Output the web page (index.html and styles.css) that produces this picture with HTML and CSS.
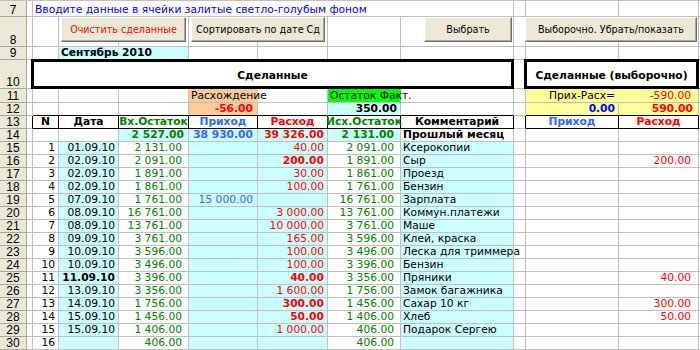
FILE: index.html
```html
<!DOCTYPE html>
<html lang="ru">
<head>
    <meta charset="UTF-8">
    <title>Учёт расходов — сентябрь 2010</title>
    <link rel="stylesheet" href="styles.css">
</head>
<body>
    <div class="sheet">
        <!-- кнопки макросов -->
        <div class="btn btn-clear">Очистить сделанные</div>
        <div class="btn btn-sort">Сортировать по дате Сд</div>
        <div class="btn btn-pick">Выбрать</div>
        <div class="btn btn-toggle">Выборочно. Убрать/показать</div>

        <!-- 7 -->
        <div class="rh">7</div>
        <div class="c"></div>
        <div class="c s7 note">Вводите данные в ячейки залитые светло-голубым фоном</div>
        <div class="c"></div><div class="c"></div><div class="c"></div><div class="c l"></div>

        <!-- 8 -->
        <div class="rh">8</div>
        <div class="c"></div><div class="c"></div><div class="c"></div><div class="c"></div>
        <div class="c"></div><div class="c"></div><div class="c"></div><div class="c"></div>
        <div class="c"></div><div class="c"></div><div class="c"></div><div class="c l"></div>

        <!-- 9 -->
        <div class="rh">9</div>
        <div class="c"></div><div class="c"></div>
        <div class="c s2 cy b">Сентябрь 2010</div>
        <div class="c"></div><div class="c"></div><div class="c"></div><div class="c"></div>
        <div class="c"></div><div class="c"></div><div class="c"></div><div class="c l"></div>

        <!-- 10 -->
        <div class="rh">10</div>
        <div class="c"></div>
        <div class="box s7">Сделанные</div>
        <div class="c"></div>
        <div class="box s2">Сделанные (выборочно)</div>
        <div class="c l"></div>

        <!-- 11 -->
        <div class="rh">11</div>
        <div class="c"></div><div class="c"></div><div class="c"></div><div class="c"></div>
        <div class="c or nr">Расхождение</div>
        <div class="c"></div>
        <div class="c lg nr">Остаток Факт.</div>
        <div class="c"></div><div class="c"></div>
        <div class="c ye r nr pj">Прих-Расх=</div>
        <div class="c ye r rd pk">-590.00</div>
        <div class="c l"></div>

        <!-- 12 -->
        <div class="rh">12</div>
        <div class="c"></div>
        <div class="c bb"></div><div class="c bb"></div><div class="c bb"></div>
        <div class="c bb or r b rd pe">-56.00</div>
        <div class="c bb"></div>
        <div class="c bb cy r b p3">350.00</div>
        <div class="c bb"></div>
        <div class="c"></div>
        <div class="c bb ye r b db pj">0.00</div>
        <div class="c bb ye r b rd p5">590.00</div>
        <div class="c l"></div>

        <!-- 13: шапка таблицы -->
        <div class="rh">13</div>
        <div class="c br"></div>
        <div class="c hd">N</div>
        <div class="c hd">Дата</div>
        <div class="c hd gr">Вх.Остаток</div>
        <div class="c hd bl">Приход</div>
        <div class="c hd rd">Расход</div>
        <div class="c hd gr">Исх.Остаток</div>
        <div class="c hd">Комментарий</div>
        <div class="c br"></div>
        <div class="c hd bl">Приход</div>
        <div class="c hd rd">Расход</div>
        <div class="c l"></div>

        <!-- 14 -->
        <div class="rh">14</div>
        <div class="c"></div><div class="c"></div><div class="c"></div>
        <div class="c cy r b gr p4">2 527.00</div>
        <div class="c cy r b bl pe">38 930.00</div>
        <div class="c cy r b rd pf">39 326.00</div>
        <div class="c cy r b gr pg">2 131.00</div>
        <div class="c b">Прошлый месяц</div>
        <div class="c"></div><div class="c"></div><div class="c"></div><div class="c l"></div>

        <!-- 15 -->
        <div class="rh">15</div><div class="c"></div>
        <div class="c r">1</div><div class="c cy r">01.09.10</div><div class="c r gr pd">2 131.00</div>
        <div class="c cy r bl pe"></div><div class="c cy r rd pf">40.00</div><div class="c r gr pg">2 091.00</div>
        <div class="c cy">Ксерокопии</div><div class="c"></div><div class="c"></div><div class="c r rd pk"></div><div class="c l"></div>

        <!-- 16 -->
        <div class="rh">16</div><div class="c"></div>
        <div class="c r">2</div><div class="c cy r">02.09.10</div><div class="c r gr pd">2 091.00</div>
        <div class="c cy r bl pe"></div><div class="c cy r rd b pf">200.00</div><div class="c r gr pg">1 891.00</div>
        <div class="c cy">Сыр</div><div class="c"></div><div class="c"></div><div class="c r rd pk">200.00</div><div class="c l"></div>

        <!-- 17 -->
        <div class="rh">17</div><div class="c"></div>
        <div class="c r">3</div><div class="c cy r">02.09.10</div><div class="c r gr pd">1 891.00</div>
        <div class="c cy r bl pe"></div><div class="c cy r rd pf">30.00</div><div class="c r gr pg">1 861.00</div>
        <div class="c cy">Проезд</div><div class="c"></div><div class="c"></div><div class="c r rd pk"></div><div class="c l"></div>

        <!-- 18 -->
        <div class="rh">18</div><div class="c"></div>
        <div class="c r">4</div><div class="c cy r">02.09.10</div><div class="c r gr pd">1 861.00</div>
        <div class="c cy r bl pe"></div><div class="c cy r rd pf">100.00</div><div class="c r gr pg">1 761.00</div>
        <div class="c cy">Бензин</div><div class="c"></div><div class="c"></div><div class="c r rd pk"></div><div class="c l"></div>

        <!-- 19 -->
        <div class="rh">19</div><div class="c"></div>
        <div class="c r">5</div><div class="c cy r">07.09.10</div><div class="c r gr pd">1 761.00</div>
        <div class="c cy r bl pe">15 000.00</div><div class="c cy r rd pf"></div><div class="c r gr pg">16 761.00</div>
        <div class="c cy">Зарплата</div><div class="c"></div><div class="c"></div><div class="c r rd pk"></div><div class="c l"></div>

        <!-- 20 -->
        <div class="rh">20</div><div class="c"></div>
        <div class="c r">6</div><div class="c cy r">08.09.10</div><div class="c r gr pd">16 761.00</div>
        <div class="c cy r bl pe"></div><div class="c cy r rd pf">3 000.00</div><div class="c r gr pg">13 761.00</div>
        <div class="c cy">Коммун.платежи</div><div class="c"></div><div class="c"></div><div class="c r rd pk"></div><div class="c l"></div>

        <!-- 21 -->
        <div class="rh">21</div><div class="c"></div>
        <div class="c r">7</div><div class="c cy r">08.09.10</div><div class="c r gr pd">13 761.00</div>
        <div class="c cy r bl pe"></div><div class="c cy r rd pf">10 000.00</div><div class="c r gr pg">3 761.00</div>
        <div class="c cy">Маше</div><div class="c"></div><div class="c"></div><div class="c r rd pk"></div><div class="c l"></div>

        <!-- 22 -->
        <div class="rh">22</div><div class="c"></div>
        <div class="c r">8</div><div class="c cy r">09.09.10</div><div class="c r gr pd">3 761.00</div>
        <div class="c cy r bl pe"></div><div class="c cy r rd pf">165.00</div><div class="c r gr pg">3 596.00</div>
        <div class="c cy">Клей, краска</div><div class="c"></div><div class="c"></div><div class="c r rd pk"></div><div class="c l"></div>

        <!-- 23 -->
        <div class="rh">23</div><div class="c"></div>
        <div class="c r">9</div><div class="c cy r">10.09.10</div><div class="c r gr pd">3 596.00</div>
        <div class="c cy r bl pe"></div><div class="c cy r rd pf">100.00</div><div class="c r gr pg">3 496.00</div>
        <div class="c cy">Леска для триммера</div><div class="c"></div><div class="c"></div><div class="c r rd pk"></div><div class="c l"></div>

        <!-- 24 -->
        <div class="rh">24</div><div class="c"></div>
        <div class="c r">10</div><div class="c cy r">10.09.10</div><div class="c r gr pd">3 496.00</div>
        <div class="c cy r bl pe"></div><div class="c cy r rd pf">100.00</div><div class="c r gr pg">3 396.00</div>
        <div class="c cy">Бензин</div><div class="c"></div><div class="c"></div><div class="c r rd pk"></div><div class="c l"></div>

        <!-- 25 -->
        <div class="rh">25</div><div class="c"></div>
        <div class="c r">11</div><div class="c cy r b">11.09.10</div><div class="c r gr pd">3 396.00</div>
        <div class="c cy r bl pe"></div><div class="c cy r rd b pf">40.00</div><div class="c r gr pg">3 356.00</div>
        <div class="c cy">Пряники</div><div class="c"></div><div class="c"></div><div class="c r rd pk">40.00</div><div class="c l"></div>

        <!-- 26 -->
        <div class="rh">26</div><div class="c"></div>
        <div class="c r">12</div><div class="c cy r">13.09.10</div><div class="c r gr pd">3 356.00</div>
        <div class="c cy r bl pe"></div><div class="c cy r rd pf">1 600.00</div><div class="c r gr pg">1 756.00</div>
        <div class="c cy">Замок багажника</div><div class="c"></div><div class="c"></div><div class="c r rd pk"></div><div class="c l"></div>

        <!-- 27 -->
        <div class="rh">27</div><div class="c"></div>
        <div class="c r">13</div><div class="c cy r">14.09.10</div><div class="c r gr pd">1 756.00</div>
        <div class="c cy r bl pe"></div><div class="c cy r rd b pf">300.00</div><div class="c r gr pg">1 456.00</div>
        <div class="c cy">Сахар 10 кг</div><div class="c"></div><div class="c"></div><div class="c r rd pk">300.00</div><div class="c l"></div>

        <!-- 28 -->
        <div class="rh">28</div><div class="c"></div>
        <div class="c r">14</div><div class="c cy r">15.09.10</div><div class="c r gr pd">1 456.00</div>
        <div class="c cy r bl pe"></div><div class="c cy r rd b pf">50.00</div><div class="c r gr pg">1 406.00</div>
        <div class="c cy">Хлеб</div><div class="c"></div><div class="c"></div><div class="c r rd pk">50.00</div><div class="c l"></div>

        <!-- 29 -->
        <div class="rh">29</div><div class="c"></div>
        <div class="c r">15</div><div class="c cy r">15.09.10</div><div class="c r gr pd">1 406.00</div>
        <div class="c cy r bl pe"></div><div class="c cy r rd pf">1 000.00</div><div class="c r gr pg">406.00</div>
        <div class="c cy">Подарок Сергею</div><div class="c"></div><div class="c"></div><div class="c r rd pk"></div><div class="c l"></div>

        <!-- 30 -->
        <div class="rh">30</div><div class="c"></div>
        <div class="c r">16</div><div class="c cy r"></div><div class="c r gr pd">406.00</div>
        <div class="c cy r bl pe"></div><div class="c cy r rd pf"></div><div class="c r gr pg">406.00</div>
        <div class="c cy"></div><div class="c"></div><div class="c"></div><div class="c r rd pk"></div><div class="c l"></div>
    </div>
</body>
</html>
```

FILE: styles.css
```css
/* базовые */
* {
    box-sizing: border-box;
    margin: 0;
    padding: 0;
}

body {
    font-family: "DejaVu Sans", Verdana, sans-serif;
    font-size: 10.7px;
    color: #000;
    background: #fff;
    overflow: hidden;
}

/* лист */
.sheet {
    position: relative;
    display: grid;
    grid-template-columns: 27px 6px 26px 60px 70px 69px 70px 73px 113px 12px 93px 80px 1px;
    grid-template-rows: 16px 30px 13px 29px 14px 13px 13px 13px repeat(16, 13px);
    width: 700px;
    border-top: 1px solid #c0c0c0;
}

/* заголовки строк */
.rh {
    display: flex;
    align-items: flex-end;
    justify-content: center;
    background: #ece9d8;
    border-right: 1px solid #aca899;
    border-bottom: 1px solid #aca899;
    font-family: "Liberation Sans", Arial, sans-serif;
    font-size: 12px;
    line-height: 11px;
}

/* ячейка */
.c {
    display: flex;
    align-items: flex-end;
    padding: 0 2px;
    line-height: 12px;
    white-space: nowrap;
    border-right: 1px solid #c0c0c0;
    border-bottom: 1px solid #c0c0c0;
}

.c.l { padding: 0; border-right: 0; }

.s7 { grid-column: span 7; }
.s2 { grid-column: span 2; }

.r { justify-content: flex-end; padding-right: 3px; }
.b { font-weight: bold; }
.nr { border-right-color: transparent; }

.note { color: #0000ff; }

/* заливки */
.cy { background: #ccffff; }
.or { background: #ffcc99; }
.lg { background: #00ff00; }
.ye { background: #ffff99; }

/* цвета текста */
.gr { color: #008000; }
.rd { color: #ff0000; }
.bl { color: #3366ff; }
.db { color: #0000ff; }

/* отступы справа по колонкам */
.p3 { padding-right: 3px; }
.p4 { padding-right: 4px; }
.p5 { padding-right: 5px; }
.pd { padding-right: 6px; }
.pe { padding-right: 4px; }
.pf { padding-right: 3px; }
.pg { padding-right: 6px; }
.pj { padding-right: 3px; }
.pk { padding-right: 7px; }

/* чёрные рамки шапки */
.bb { border-bottom-color: #000; }
.br { border-right-color: #000; }

.hd {
    justify-content: center;
    font-weight: bold;
    border-right-color: #000;
    border-bottom-color: #000;
}

/* объединённые заголовки с толстой рамкой */
.box {
    display: flex;
    align-items: center;
    justify-content: center;
    margin: -1px 0 0 -2px;
    padding-top: 2px;
    border: 3px solid #000;
    background: #fff;
    font-weight: bold;
    white-space: nowrap;
}

/* кнопки */
.btn {
    position: absolute;
    top: 16px;
    height: 25px;
    display: flex;
    align-items: center;
    justify-content: center;
    background: #ece9d8;
    border: 1px solid;
    border-color: #fff #716f64 #716f64 #fff;
    box-shadow: inset -1px -1px 0 #aca899;
    font-size: 9.6px;
    white-space: nowrap;
}

.btn-clear { left: 61px; width: 125px; color: #ff0000; }
.btn-sort { left: 191px; width: 134px; }
.btn-pick { left: 424px; width: 88px; }
.btn-toggle { left: 525px; width: 172px; }
```
